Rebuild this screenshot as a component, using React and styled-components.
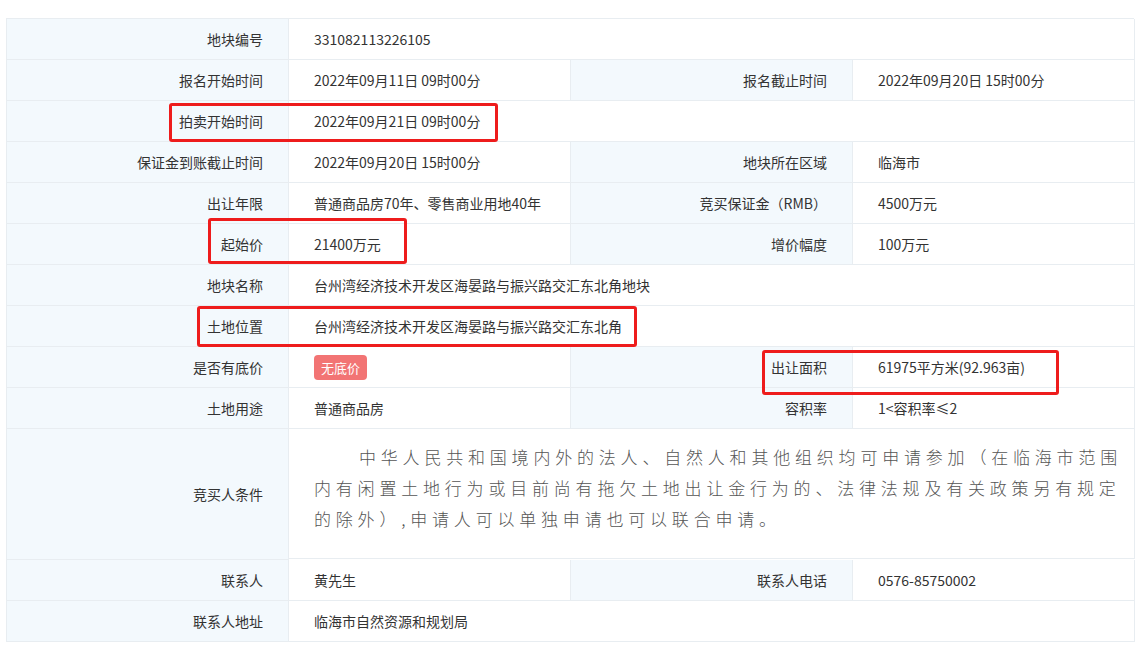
import React from "react";
import styled, { createGlobalStyle } from "styled-components";

const Global = createGlobalStyle`
  body { margin: 0; background: #fff; font-family: "Microsoft YaHei", "Noto Sans CJK SC", sans-serif; }
`;
const Wrap = styled.div`
  position: relative;
  padding: 18px 13px 0 6px;
`;
const Table = styled.div`
  display: grid;
  grid-template-columns: 282px 282px 282px 282px;
  border-top: 1px solid #e8edf1;
  border-left: 1px solid #e8edf1;
`;
const Label = styled.div`
  background: #f3f9fd;
  display: flex; align-items: center; justify-content: flex-end;
  padding-right: 25px;
  height: ${p => p.h || 40}px;
  border-right: 1px solid #e8edf1; border-bottom: 1px solid #e8edf1;
  font-size: 14px; color: #333;
`;
const Value = styled.div`
  display: flex; align-items: center;
  padding-left: 25px;
  height: ${p => p.h || 40}px;
  grid-column: span ${p => p.span || 1};
  border-right: 1px solid #e8edf1; border-bottom: 1px solid #e8edf1;
  font-size: 14px; color: #333;
`;
const CondValue = styled.div`
  grid-column: span 3;
  height: 130px;
  padding: 12px 12px 0 25px;
  box-sizing: border-box;
  border-right: 1px solid #e8edf1; border-bottom: 1px solid #e8edf1;
  font-size: 17px; color: #555; letter-spacing: 4.8px; line-height: 31px;
  text-indent: 45px; font-weight: 300;
`;
const Badge = styled.span`
  background: #f27474; color: #fff; font-size: 13px;
  padding: 3px 7px; border-radius: 4px;
`;
const RedBox = styled.div`
  position: absolute;
  border: 3px solid #ee1c1c; border-radius: 3px;
  box-sizing: border-box;
`;

const Row = ({ l, v, l2, v2 }) => (
  <>
    <Label>{l}</Label>
    {l2 ? (<><Value>{v}</Value><Label>{l2}</Label><Value>{v2}</Value></>) : <Value span={3}>{v}</Value>}
  </>
);

export default function App() {
  return (
    <Wrap>
      <Global />
      <Table>
        <Row l="地块编号" v="331082113226105" />
        <Row l="报名开始时间" v="2022年09月11日 09时00分" l2="报名截止时间" v2="2022年09月20日 15时00分" />
        <Row l="拍卖开始时间" v="2022年09月21日 09时00分" />
        <Row l="保证金到账截止时间" v="2022年09月20日 15时00分" l2="地块所在区域" v2="临海市" />
        <Row l="出让年限" v="普通商品房70年、零售商业用地40年" l2="竞买保证金（RMB）" v2="4500万元" />
        <Row l="起始价" v="21400万元" l2="增价幅度" v2="100万元" />
        <Row l="地块名称" v="台州湾经济技术开发区海晏路与振兴路交汇东北角地块" />
        <Row l="土地位置" v="台州湾经济技术开发区海晏路与振兴路交汇东北角" />
        <Row l="是否有底价" v={<Badge>无底价</Badge>} l2="出让面积" v2="61975平方米(92.963亩)" />
        <Row l="土地用途" v="普通商品房" l2="容积率" v2="1<容积率≤2" />
        <Label h={130}>竞买人条件</Label>
        <CondValue>中华人民共和国境内外的法人、自然人和其他组织均可申请参加（在临海市范围内有闲置土地行为或目前尚有拖欠土地出让金行为的、法律法规及有关政策另有规定的除外）,申请人可以单独申请也可以联合申请。</CondValue>
        <Row l="联系人" v="黄先生" l2="联系人电话" v2="0576-85750002" />
        <Row l="联系人地址" v="临海市自然资源和规划局" />
      </Table>
      <RedBox style={{ left: 169, top: 103, width: 329, height: 39 }} />
      <RedBox style={{ left: 208, top: 218, width: 199, height: 46 }} />
      <RedBox style={{ left: 197, top: 306, width: 440, height: 41 }} />
      <RedBox style={{ left: 762, top: 350, width: 297, height: 45 }} />
    </Wrap>
  );
}
